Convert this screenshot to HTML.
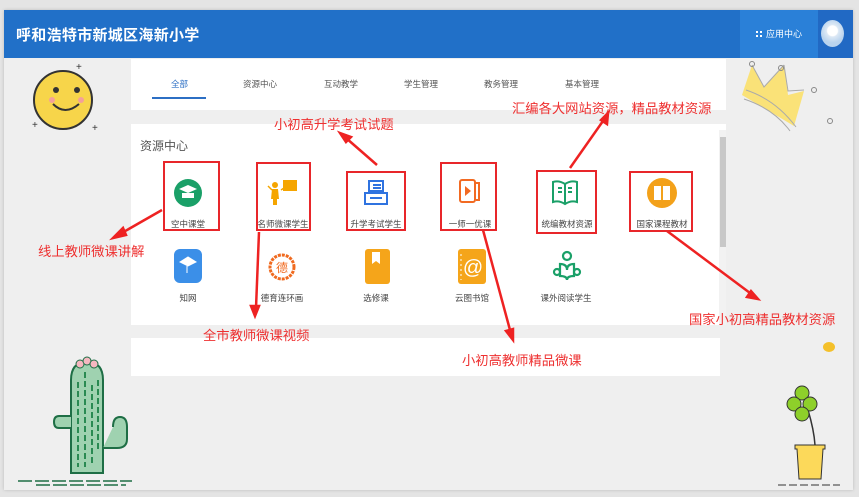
<!DOCTYPE html>
<html><head><meta charset="utf-8"><style>
*{margin:0;padding:0;box-sizing:border-box}
body{width:859px;height:497px;background:#e4e4e4;font-family:"Liberation Sans","Noto Sans CJK SC",sans-serif;position:relative;overflow:hidden}
.frame{position:absolute;left:4px;top:10px;width:849px;height:480px;background:#efefef;box-shadow:0 0 3px #bbb}
.abs{position:absolute}
.hdr{left:4px;top:10px;width:849px;height:48px;background:#2170c8}
.title{left:16px;top:24px;color:#fff;font-size:15px;font-weight:bold;letter-spacing:0.3px}
.app{left:740px;top:10px;width:78px;height:48px;background:#2a80d8;color:#fff;font-size:9px;line-height:48px;padding-left:26px}
.av{left:818px;top:10px;width:35px;height:48px;background:#2169c4}
.nav{left:131px;top:59px;width:595px;height:51px;background:#fff}
.tab{top:78px;font-size:8.5px;color:#555}
.panel{left:131px;top:124px;width:595px;height:201px;background:#fff}
.panel2{left:131px;top:338px;width:589px;height:38px;background:#fff}
.lbl{font-size:8.5px;color:#444;text-align:center;width:80px}
.rb{position:absolute;border:2px solid #e8262a}
.ann{position:absolute;color:#ee3030;font-size:13.3px;white-space:nowrap}
</style></head><body>
<div class="frame"></div>
<div class="abs hdr"></div>
<div class="abs title">呼和浩特市新城区海新小学</div>
<div class="abs app">应用中心</div>
<div class="abs" style="left:756px;top:31px;width:6px;height:6px;background:linear-gradient(#fff 0 2px,transparent 2px 4px,#fff 4px);"></div>
<div class="abs" style="left:758px;top:31px;width:2px;height:6px;background:#2a80d8"></div>
<div class="abs av"></div>
<div class="abs" style="left:821px;top:20px;width:23px;height:27px;border-radius:50%;background:radial-gradient(circle at 50% 40%,#fff 0 5px,#dde9f5 6px,#b9d3ee 12px);"></div>

<div class="abs nav"></div>
<div class="abs tab" style="left:171px;color:#2c6fc4">全部</div>
<div class="abs" style="left:152px;top:97px;width:54px;height:1.5px;background:#2c6fc4"></div>
<div class="abs tab" style="left:243px">资源中心</div>
<div class="abs tab" style="left:324px">互动教学</div>
<div class="abs tab" style="left:404px">学生管理</div>
<div class="abs tab" style="left:484px">教务管理</div>
<div class="abs tab" style="left:565px">基本管理</div>

<div class="abs panel"></div>
<div class="abs" style="left:719px;top:130px;width:7px;height:195px;background:#f2f2f2"></div>
<div class="abs" style="left:720px;top:137px;width:6px;height:110px;background:#c8c8c8"></div>
<div class="abs" style="left:140px;top:137px;font-size:12px;color:#555">资源中心</div>
<div class="abs panel2"></div>

<svg class="abs" style="left:0;top:0" width="859" height="497">
<circle cx="188" cy="193" r="14" fill="#1aa068"/>
<path d="M179 189 l9-4 9 4 -9 4z M182 193 h12 v5 h-12z" fill="#fff"/>
<g fill="#f5a500"><circle cx="275" cy="185" r="3"/><path d="M272 189 h6 l1 10 h-2 v6 h-4 v-6 h-2z"/><path d="M268 186 l4 4 M281 190 l6-4" stroke="#f5a500" stroke-width="1.5"/><rect x="283" y="180" width="14" height="11"/></g>
<g fill="none" stroke="#2f73e0" stroke-width="2"><rect x="369" y="181" width="14" height="10"/><rect x="365" y="193" width="22" height="11"/><path d="M370 198 h12 M373 185 h8 M373 188 h8"/></g>
<g fill="none" stroke="#f26a22" stroke-width="2"><rect x="460" y="180" width="15" height="22" rx="2"/><path d="M476 183 h3 v17 h-3"/></g><path d="M465 186 l6 5 -6 5z" fill="#f26a22"/>
<g fill="none" stroke="#1aa068" stroke-width="2"><path d="M553 182 q6-2 12 2 q6-4 12-2 v20 q-6-2-12 2 q-6-4-12-2z M565 184 v20"/><path d="M558 188 h4 M558 192 h4 M568 188 h4 M568 192 h4"/></g>
<circle cx="662" cy="193" r="15" fill="#f3a11a"/><path d="M654 186 h7 v14 h-7z M663 186 h7 v14 h-7z" fill="#fff"/>
<rect x="174" y="249" width="28" height="34" rx="6" fill="#3b8fe8"/><path d="M180 262 l8-5 8 5 -8 4z M187 266 v7" fill="#fff" stroke="#fff"/>
<circle cx="282" cy="267" r="12" fill="none" stroke="#f06a1f" stroke-width="3" stroke-dasharray="3 1"/><text x="282" y="272" font-size="12" fill="#f06a1f" text-anchor="middle" font-family="Noto Sans CJK SC">德</text>
<rect x="365" y="249" width="25" height="35" rx="3" fill="#f5a51a"/><path d="M372 252 v12 l4-3 4 3 v-12" fill="#fff"/>
<rect x="458" y="249" width="28" height="35" rx="3" fill="#f5a51a"/><text x="473" y="274" font-size="20" fill="#fff" text-anchor="middle">@</text><path d="M461 254 v26" stroke="#fff" stroke-dasharray="2 3"/>
<g fill="none" stroke="#1aa068" stroke-width="2.2"><circle cx="567" cy="256" r="4"/><path d="M560 264 q7 0 7 6 q0-6 7-6 v12 q-7 0-7 4 q0-4-7-4z"/><circle cx="557" cy="272" r="3"/><circle cx="577" cy="272" r="3"/></g>
<g stroke="#ee2222" stroke-width="2.5" fill="#ee2222">
<line x1="162" y1="210" x2="120" y2="234"/><path d="M113 238 l10-10 3 7z"/>
<line x1="259" y1="232" x2="256" y2="308"/><path d="M255 316 l-4-10 8 0z"/>
<line x1="377" y1="165" x2="346" y2="138"/><path d="M340 133 l11 4 -5 5z"/>
<line x1="570" y1="168" x2="603" y2="121"/><path d="M608 113 l-1 11 -6-4z"/>
<line x1="483" y1="230" x2="510" y2="330"/><path d="M513 340 l-7-9 7-2z"/>
<line x1="667" y1="231" x2="750" y2="293"/><path d="M758 299 l-11-2 4-6z"/>
</g>
<circle cx="63" cy="100" r="29" fill="#f7d54a" stroke="#333" stroke-width="2"/>
<circle cx="56" cy="90" r="3" fill="#333"/><circle cx="77" cy="90" r="3" fill="#333"/>
<circle cx="52" cy="100" r="3" fill="#f4a09a"/><circle cx="81" cy="100" r="3" fill="#f4a09a"/>
<path d="M53 104 q12 12 26 0" stroke="#333" stroke-width="2" fill="none"/>
<text x="76" y="70" font-size="10" fill="#333">+</text><text x="32" y="128" font-size="10" fill="#333">+</text><text x="92" y="131" font-size="10" fill="#333">+</text>
<path d="M742 95 l10-30 12 22 20-22 4 30 16-4 -10 35 z" fill="#fbe06a" opacity="0.9"/>
<path d="M752 65 l12 22 20-22 M784 65 l4 26 16-1 M746 90 q30 10 50 37 M744 99 q30 10 46 32" stroke="#aaa" fill="none"/>
<circle cx="752" cy="64" r="2.5" fill="none" stroke="#888"/><circle cx="781" cy="68" r="2.5" fill="none" stroke="#888"/><circle cx="814" cy="90" r="2.5" fill="none" stroke="#888"/><circle cx="830" cy="121" r="2.5" fill="none" stroke="#888"/>
<path d="M71 380 q0-18 16-18 q16 0 16 18 v93 h-32z" fill="#9fd2b0" stroke="#1e6e45" stroke-width="2"/>
<path d="M71 428 h-12 q-5 0-5-6 q0-6 5-6 h12 M103 448 h14 q10 0 10-9 v-12 q0-10-7-10 q-7 0-7 10" fill="#9fd2b0" stroke="#1e6e45" stroke-width="2"/>
<path d="M78 382 v85 M85 372 v95 M92 385 v80 M98 380 v70" stroke="#2a8a52" stroke-width="2" stroke-dasharray="6 3"/>
<circle cx="80" cy="364" r="4" fill="#f6b7c0" stroke="#1e6e45"/><circle cx="87" cy="361" r="4" fill="#f6b7c0" stroke="#1e6e45"/><circle cx="94" cy="364" r="4" fill="#f6b7c0" stroke="#1e6e45"/>
<path d="M18 481 h114 M36 485 h90" stroke="#1e6e45" stroke-width="1.5" stroke-dasharray="14 3"/>
<path d="M808 410 q6 20 7 35" stroke="#333" stroke-width="1.5" fill="none"/>
<circle cx="802" cy="393" r="7" fill="#8ed02a" stroke="#333"/><circle cx="794" cy="404" r="7" fill="#8ed02a" stroke="#333"/><circle cx="810" cy="404" r="7" fill="#8ed02a" stroke="#333"/><circle cx="802" cy="414" r="7" fill="#8ed02a" stroke="#333"/>
<path d="M795 445 h30 v4 h-2 l-2 30 h-22 l-2-30 h-2z" fill="#fcd95a" stroke="#333"/>
<path d="M778 485 h62" stroke="#333" stroke-dasharray="8 3"/>
<ellipse cx="829" cy="347" rx="6" ry="5" fill="#f4c02a"/>
</svg>

<div class="abs lbl" style="left:148px;top:218px">空中课堂</div>
<div class="abs lbl" style="left:243px;top:218px">名师微课学生</div>
<div class="abs lbl" style="left:336px;top:218px">升学考试学生</div>
<div class="abs lbl" style="left:430px;top:218px">一师一优课</div>
<div class="abs lbl" style="left:527px;top:218px">统编教材资源</div>
<div class="abs lbl" style="left:622px;top:218px">国家课程教材</div>
<div class="abs lbl" style="left:148px;top:292px">知网</div>
<div class="abs lbl" style="left:242px;top:292px">德育连环画</div>
<div class="abs lbl" style="left:336px;top:292px">选修课</div>
<div class="abs lbl" style="left:432px;top:292px">云图书馆</div>
<div class="abs lbl" style="left:526px;top:292px">课外阅读学生</div>

<div class="rb" style="left:163px;top:161px;width:57px;height:70px"></div>
<div class="rb" style="left:256px;top:162px;width:55px;height:69px"></div>
<div class="rb" style="left:346px;top:171px;width:60px;height:60px"></div>
<div class="rb" style="left:440px;top:162px;width:57px;height:69px"></div>
<div class="rb" style="left:536px;top:170px;width:61px;height:64px"></div>
<div class="rb" style="left:629px;top:171px;width:64px;height:61px"></div>

<div class="ann" style="left:274px;top:114px">小初高升学考试试题</div>
<div class="ann" style="left:512px;top:98px">汇编各大网站资源，精品教材资源</div>
<div class="ann" style="left:38px;top:241px">线上教师微课讲解</div>
<div class="ann" style="left:203px;top:325px">全市教师微课视频</div>
<div class="ann" style="left:462px;top:350px">小初高教师精品微课</div>
<div class="ann" style="left:689px;top:309px">国家小初高精品教材资源</div>
</body></html>
